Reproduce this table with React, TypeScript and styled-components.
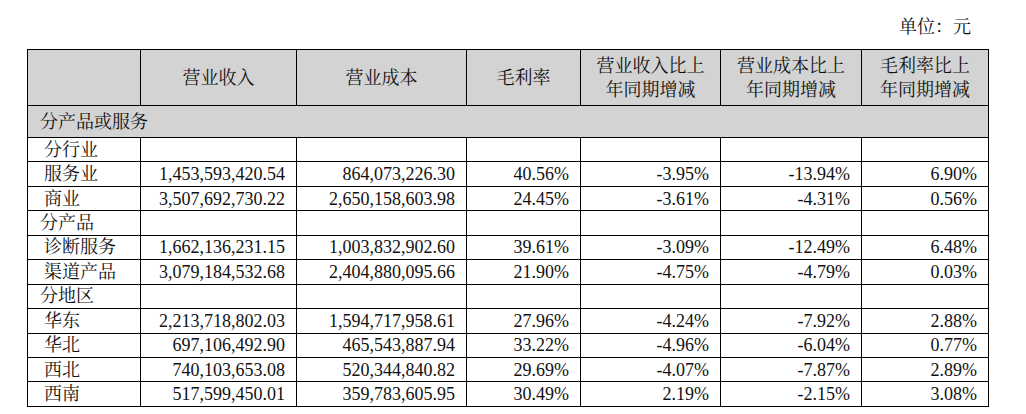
import React from "react";
import styled, { createGlobalStyle } from "styled-components";

const GlobalStyle = createGlobalStyle`
  html, body {
    margin: 0;
    padding: 0;
    background: #ffffff;
  }
  body {
    font-family: "Liberation Serif", "Noto Serif CJK SC", "Noto Sans CJK SC", serif;
    color: #111111;
  }
`;

type Row =
  | { kind: "group"; label: string; indent?: boolean }
  | { kind: "item"; label: string; values: string[] };

const rows: Row[] = [
  { kind: "group", label: "分行业", indent: true },
  { kind: "item", label: "服务业", values: ["1,453,593,420.54", "864,073,226.30", "40.56%", "-3.95%", "-13.94%", "6.90%"] },
  { kind: "item", label: "商业", values: ["3,507,692,730.22", "2,650,158,603.98", "24.45%", "-3.61%", "-4.31%", "0.56%"] },
  { kind: "group", label: "分产品" },
  { kind: "item", label: "诊断服务", values: ["1,662,136,231.15", "1,003,832,902.60", "39.61%", "-3.09%", "-12.49%", "6.48%"] },
  { kind: "item", label: "渠道产品", values: ["3,079,184,532.68", "2,404,880,095.66", "21.90%", "-4.75%", "-4.79%", "0.03%"] },
  { kind: "group", label: "分地区" },
  { kind: "item", label: "华东", values: ["2,213,718,802.03", "1,594,717,958.61", "27.96%", "-4.24%", "-7.92%", "2.88%"] },
  { kind: "item", label: "华北", values: ["697,106,492.90", "465,543,887.94", "33.22%", "-4.96%", "-6.04%", "0.77%"] },
  { kind: "item", label: "西北", values: ["740,103,653.08", "520,344,840.82", "29.69%", "-4.07%", "-7.87%", "2.89%"] },
  { kind: "item", label: "西南", values: ["517,599,450.01", "359,783,605.95", "30.49%", "2.19%", "-2.15%", "3.08%"] },
];

const headers: string[][] = [
  [],
  ["营业收入"],
  ["营业成本"],
  ["毛利率"],
  ["营业收入比上", "年同期增减"],
  ["营业成本比上", "年同期增减"],
  ["毛利率比上", "年同期增减"],
];

const colWidths = [113, 156, 170, 114, 140, 141, 127];

export default function App() {
  return (
    <Page>
      <GlobalStyle />
      <Unit>单位：元</Unit>
      <Table>
        <colgroup>
          {colWidths.map((w, i) => (
            <col key={i} style={{ width: w }} />
          ))}
        </colgroup>
        <thead>
          <HeadRow>
            {headers.map((lines, i) => (
              <HeadCell key={i}>
                {lines.map((l) => (
                  <HeadLine key={l}>{l}</HeadLine>
                ))}
              </HeadCell>
            ))}
          </HeadRow>
        </thead>
        <tbody>
          <SectionRow>
            <SectionCell colSpan={7}>分产品或服务</SectionCell>
          </SectionRow>
          {rows.map((r) =>
            r.kind === "group" ? (
              <BodyRow key={r.label}>
                <LabelCell $indent={!!r.indent}>{r.label}</LabelCell>
                {colWidths.slice(1).map((_, i) => (
                  <NumCell key={i} />
                ))}
              </BodyRow>
            ) : (
              <BodyRow key={r.label}>
                <LabelCell $indent>{r.label}</LabelCell>
                {r.values.map((v, i) => (
                  <NumCell key={i}>{v}</NumCell>
                ))}
              </BodyRow>
            )
          )}
        </tbody>
      </Table>
    </Page>
  );
}

const Page = styled.div`
  width: 962px;
  padding-left: 27px;
`;

const Unit = styled.div`
  height: 49px;
  box-sizing: border-box;
  padding: 16px 18px 0 0;
  line-height: 22px;
  font-size: 18px;
  text-align: right;
`;

const Table = styled.table`
  width: 962px;
  border-collapse: collapse;
  table-layout: fixed;
  font-size: 18px;
  border: 1px solid #000;

  td, th {
    border: 1px solid #000;
    padding: 0;
  }
`;

const HeadRow = styled.tr`
  height: 56px;
  background: #d3d3d3;
`;

const HeadCell = styled.th`
  font-weight: normal;
  text-align: center;
  vertical-align: middle;
  line-height: 24px;
`;

const HeadLine = styled.div`
  white-space: nowrap;
`;

const SectionRow = styled.tr`
  height: 32px;
  background: #d3d3d3;
`;

const SectionCell = styled.td`
  padding-left: 12px !important;
  text-align: left;
  line-height: 22px;
`;

const BodyRow = styled.tr`
  height: 24.45px;
`;

const LabelCell = styled.td<{ $indent: boolean }>`
  padding-left: ${(p) => (p.$indent ? "16px" : "12px")} !important;
  line-height: 22px;
  white-space: nowrap;
`;

const NumCell = styled.td`
  text-align: right;
  padding-right: 11px !important;
  line-height: 22px;
  white-space: nowrap;
`;
